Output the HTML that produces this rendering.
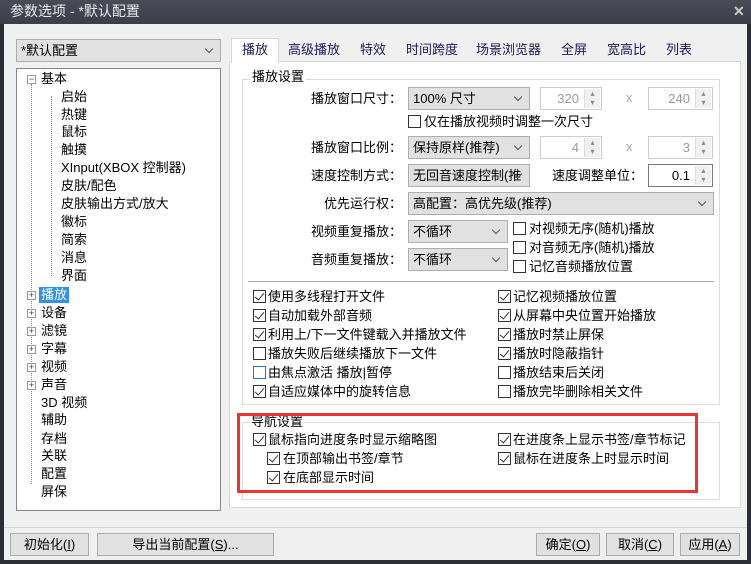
<!DOCTYPE html>
<html><head><meta charset="utf-8"><style>
*{margin:0;padding:0;box-sizing:border-box}
body{width:751px;height:564px;overflow:hidden;background:#2c2e36;font-family:"Liberation Sans","Noto Sans CJK SC",sans-serif;font-size:13px;color:#000;position:relative}
.a{position:absolute;white-space:nowrap}
.t{position:absolute;white-space:nowrap;line-height:16px}
.cb{position:absolute;width:13px;height:13px;border:1px solid #333;background:#fff}
.cb.k::after{content:"";position:absolute;left:3px;top:0px;width:4px;height:8px;border:solid #333;border-width:0 1px 1px 0;transform:rotate(40deg)}
.combo{position:absolute;background:#e1e1e1;border:1px solid #adadad;height:23px;line-height:21px;padding-left:4px}
.combo::after{content:"";position:absolute;right:8px;top:6px;width:5px;height:5px;border:solid #555;border-width:0 1px 1px 0;transform:rotate(45deg)}
.spin{position:absolute;background:#fff;border:1px solid #ccc;height:23px;line-height:21px;text-align:right;padding-right:22px;color:#999}
.spin.en{border-color:#7a7a7a;color:#000}
.spin::after{content:"▴\A▾";white-space:pre;position:absolute;right:1px;top:1px;width:15px;height:19px;font-size:8px;line-height:9px;text-align:center;color:#888;background:#f0f0f0;border-left:1px solid #ddd}
.btn{position:absolute;background:#e1e1e1;border:1px solid #adadad;height:23px;line-height:21px;text-align:center}
.tv{position:absolute;left:25px;width:0;border-left:1px dotted #888}
.ex{position:absolute;width:9px;height:9px;border:1px solid #999;background:#fff;font-size:9px;line-height:7px;text-align:center;color:#336}
.tab{position:absolute;top:42px;line-height:16px;color:#1a1a5a}
</style></head><body>
<div class="a" style="left:0;top:0;width:751px;height:24px;background:linear-gradient(#484b58,#3c3f4a)"></div>
<div class="t" style="left:10px;top:3px;color:#e8e8ee;font-size:14px">参数选项 - *默认配置</div>
<div class="t" style="left:733px;top:3px;color:#ccc;font-size:14px;font-weight:bold">✕</div>
<div class="a" style="left:4px;top:24px;width:743px;height:536px;background:#f0f0f0"></div>

<div class="combo" style="left:16px;top:39px;width:205px;height:23px">*默认配置</div>
<div class="a" style="left:16px;top:68px;width:205px;height:443px;background:#fff;border:1px solid #828790"></div>
<div class="tv" style="left:31px;top:84px;height:400px"></div>
<div class="tv" style="left:51px;top:96px;height:180px"></div>
<div class="ex" style="left:27px;top:75px">−</div>
<div class="t" style="left:41px;top:71px">基本</div>
<div class="t" style="left:61px;top:89px">启始</div>
<div class="t" style="left:61px;top:107px">热键</div>
<div class="t" style="left:61px;top:124px">鼠标</div>
<div class="t" style="left:61px;top:142px">触摸</div>
<div class="t" style="left:61px;top:160px">XInput(XBOX 控制器)</div>
<div class="t" style="left:61px;top:178px">皮肤/配色</div>
<div class="t" style="left:61px;top:196px">皮肤输出方式/放大</div>
<div class="t" style="left:61px;top:214px">徽标</div>
<div class="t" style="left:61px;top:232px">简索</div>
<div class="t" style="left:61px;top:250px">消息</div>
<div class="t" style="left:61px;top:268px">界面</div>
<div class="ex" style="left:27px;top:291px">+</div>
<div class="t" style="left:39px;top:287px;background:#3390e8;color:#fff;padding:0 2px">播放</div>
<div class="ex" style="left:27px;top:309px">+</div><div class="t" style="left:41px;top:305px">设备</div>
<div class="ex" style="left:27px;top:327px">+</div><div class="t" style="left:41px;top:323px">滤镜</div>
<div class="ex" style="left:27px;top:345px">+</div><div class="t" style="left:41px;top:341px">字幕</div>
<div class="ex" style="left:27px;top:363px">+</div><div class="t" style="left:41px;top:359px">视频</div>
<div class="ex" style="left:27px;top:381px">+</div><div class="t" style="left:41px;top:377px">声音</div>
<div class="t" style="left:41px;top:395px">3D 视频</div>
<div class="t" style="left:41px;top:412px">辅助</div>
<div class="t" style="left:41px;top:431px">存档</div>
<div class="t" style="left:41px;top:448px">关联</div>
<div class="t" style="left:41px;top:466px">配置</div>
<div class="t" style="left:41px;top:484px">屏保</div>

<div class="a" style="left:229px;top:61px;width:512px;height:447px;background:#fff;border:1px solid #d9d9d9"></div>
<div class="a" style="left:231px;top:38px;width:48px;height:25px;background:#fff;border:1px solid #d9d9d9;border-bottom:none"></div>
<div class="tab" style="left:242px;top:42px">播放</div>
<div class="tab" style="left:288px">高级播放</div>
<div class="tab" style="left:360px">特效</div>
<div class="tab" style="left:406px">时间跨度</div>
<div class="tab" style="left:476px">场景浏览器</div>
<div class="tab" style="left:561px">全屏</div>
<div class="tab" style="left:607px">宽高比</div>
<div class="tab" style="left:666px">列表</div>

<div class="a" style="left:242px;top:79px;width:478px;height:326px;border:1px solid #dcdcdc"></div>
<div class="t" style="left:250px;top:69px;background:#fff;padding:0 2px">播放设置</div>
<div class="t" style="left:311px;top:91px">播放窗口尺寸：</div>
<div class="combo" style="left:408px;top:87px;width:122px">100% 尺寸</div>
<div class="spin" style="left:540px;top:87px;width:62px">320</div>
<div class="t" style="left:626px;top:90px;color:#aaa">x</div>
<div class="spin" style="left:648px;top:87px;width:65px">240</div>
<div class="cb" style="left:408px;top:115px"></div><div class="t" style="left:424px;top:114px">仅在播放视频时调整一次尺寸</div>
<div class="t" style="left:311px;top:140px">播放窗口比例：</div>
<div class="combo" style="left:408px;top:136px;width:122px">保持原样(推荐)</div>
<div class="spin" style="left:540px;top:136px;width:62px">4</div>
<div class="t" style="left:626px;top:139px;color:#aaa">x</div>
<div class="spin" style="left:648px;top:136px;width:65px">3</div>
<div class="t" style="left:311px;top:168px">速度控制方式：</div>
<div class="combo" style="left:408px;top:164px;width:122px;overflow:hidden">无回音速度控制(推</div>
<div class="t" style="left:552px;top:168px">速度调整单位：</div>
<div class="spin en" style="left:648px;top:164px;width:65px">0.1</div>
<div class="t" style="left:324px;top:196px">优先运行权：</div>
<div class="combo" style="left:408px;top:192px;width:306px">高配置：高优先级(推荐)</div>
<div class="t" style="left:311px;top:224px">视频重复播放：</div>
<div class="combo" style="left:408px;top:220px;width:100px">不循环</div>
<div class="t" style="left:311px;top:252px">音频重复播放：</div>
<div class="combo" style="left:408px;top:248px;width:100px">不循环</div>
<div class="cb" style="left:513px;top:222px"></div><div class="t" style="left:529px;top:221px">对视频无序(随机)播放</div>
<div class="cb" style="left:513px;top:241px"></div><div class="t" style="left:529px;top:240px">对音频无序(随机)播放</div>
<div class="cb" style="left:513px;top:260px"></div><div class="t" style="left:529px;top:259px">记忆音频播放位置</div>
<div class="a" style="left:248px;top:281px;width:466px;height:1px;background:#aaa"></div>

<div class="cb k" style="left:253px;top:290px"></div><div class="t" style="left:268px;top:289px">使用多线程打开文件</div>
<div class="cb k" style="left:253px;top:309px"></div><div class="t" style="left:268px;top:308px">自动加载外部音频</div>
<div class="cb k" style="left:253px;top:328px"></div><div class="t" style="left:268px;top:327px">利用上/下一文件键载入并播放文件</div>
<div class="cb" style="left:253px;top:347px"></div><div class="t" style="left:268px;top:346px">播放失败后继续播放下一文件</div>
<div class="cb" style="left:253px;top:366px;border-color:#1a7ad8"></div><div class="t" style="left:268px;top:365px">由焦点激活 播放|暂停</div>
<div class="cb k" style="left:253px;top:385px"></div><div class="t" style="left:268px;top:384px">自适应媒体中的旋转信息</div>
<div class="cb k" style="left:498px;top:290px"></div><div class="t" style="left:513px;top:289px">记忆视频播放位置</div>
<div class="cb k" style="left:498px;top:309px"></div><div class="t" style="left:513px;top:308px">从屏幕中央位置开始播放</div>
<div class="cb k" style="left:498px;top:328px"></div><div class="t" style="left:513px;top:327px">播放时禁止屏保</div>
<div class="cb k" style="left:498px;top:347px"></div><div class="t" style="left:513px;top:346px">播放时隐蔽指针</div>
<div class="cb" style="left:498px;top:366px"></div><div class="t" style="left:513px;top:365px">播放结束后关闭</div>
<div class="cb" style="left:498px;top:385px"></div><div class="t" style="left:513px;top:384px">播放完毕删除相关文件</div>

<div class="a" style="left:242px;top:422px;width:478px;height:78px;border:1px solid #dcdcdc"></div>
<div class="t" style="left:250px;top:414px;background:#fff;padding:0 1px">导航设置</div>
<div class="cb k" style="left:253px;top:433px"></div><div class="t" style="left:268px;top:432px">鼠标指向进度条时显示缩略图</div>
<div class="cb k" style="left:267px;top:452px"></div><div class="t" style="left:283px;top:451px">在顶部输出书签/章节</div>
<div class="cb k" style="left:267px;top:471px"></div><div class="t" style="left:283px;top:470px">在底部显示时间</div>
<div class="cb k" style="left:498px;top:433px"></div><div class="t" style="left:513px;top:432px">在进度条上显示书签/章节标记</div>
<div class="cb k" style="left:498px;top:452px"></div><div class="t" style="left:513px;top:451px">鼠标在进度条上时显示时间</div>
<div class="a" style="left:237px;top:413px;width:461px;height:80px;border:3px solid #ee3333"></div>

<div class="a" style="left:4px;top:527px;width:743px;height:1px;background:#d5d5d5"></div>
<div class="btn" style="left:10px;top:533px;width:79px">初始化(<u>I</u>)</div>
<div class="btn" style="left:97px;top:533px;width:177px">导出当前配置(<u>S</u>)...</div>
<div class="btn" style="left:536px;top:533px;width:64px">确定(<u>O</u>)</div>
<div class="btn" style="left:606px;top:533px;width:68px">取消(<u>C</u>)</div>
<div class="btn" style="left:680px;top:533px;width:60px">应用(<u>A</u>)</div>
</body></html>
